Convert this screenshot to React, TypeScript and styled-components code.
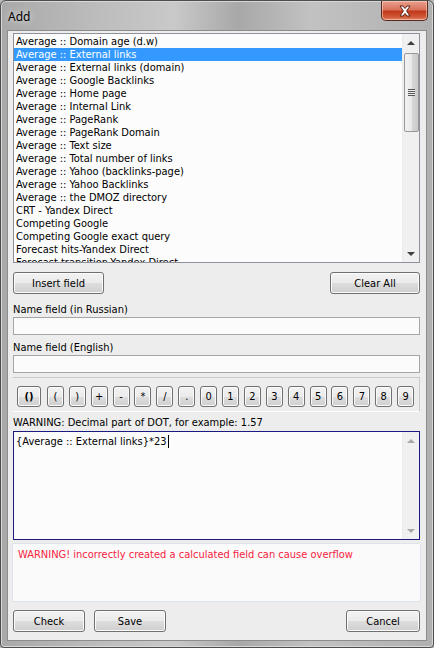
import React from 'react';
import styled, { createGlobalStyle } from 'styled-components';

const GlobalStyle = createGlobalStyle`
    html, body {
        margin: 0;
        padding: 0;
        background: #b8b8b8;
    }
    * {
        box-sizing: border-box;
    }
`;

const Window = styled.div`
    width: 434px;
    height: 648px;
    border: 1px solid #4d4d4d;
    border-radius: 6px 6px 4px 4px;
    padding: 0 6px 6px 6px;
    display: flex;
    flex-direction: column;
    background: linear-gradient(90deg, #a9a9a9 0%, #bcbcbc 22%, #c9c9c9 40%, #a8a8a8 55%, #c2c2c2 72%, #b0b0b0 100%);
    box-shadow: inset 0 0 0 1px #d8d8d8;
    font-family: 'DejaVu Sans Condensed', 'DejaVu Sans', sans-serif;
    font-size: 11px;
    color: #000;
    overflow: hidden;
`;

const TitleBar = styled.div`
    height: 29px;
    display: flex;
    align-items: flex-start;
    justify-content: space-between;
`;

const Title = styled.div`
    margin-top: 7px;
    margin-left: 1px;
    font-family: 'Noto Sans', 'DejaVu Sans', sans-serif;
    font-size: 12px;
    color: #000;
    text-shadow: 0 0 6px rgba(255, 255, 255, 0.9);
`;

const CloseButton = styled.div`
    width: 47px;
    height: 20px;
    margin-right: -1px;
    border: 1px solid #5a2a22;
    border-top: none;
    border-radius: 0 0 5px 5px;
    background: linear-gradient(#e8a08e 0%, #d8735c 45%, #c2391c 55%, #d15a3a 85%, #e08a6a 100%);
    box-shadow: inset 0 0 0 1px rgba(255, 220, 200, 0.55);
    display: flex;
    align-items: center;
    justify-content: center;
`;

const Client = styled.div`
    flex: 1;
    border: 1px solid #8c8c8c;
    background: #ededed;
    padding: 2px 6px 8px 5px;
    display: flex;
    flex-direction: column;
`;

const ListBox = styled.div`
    height: 230px;
    border: 1px solid #8e9199;
    background: #fcfcfc;
    display: flex;
    overflow: hidden;
`;

const ListItems = styled.div`
    flex: 1;
    padding-top: 1px;
    overflow: hidden;
`;

const ListItem = styled.div<{ $selected?: boolean }>`
    height: 13px;
    line-height: 13px;
    padding-left: 2px;
    white-space: nowrap;
    background: ${(p) => (p.$selected ? '#3399ff' : 'transparent')};
    color: ${(p) => (p.$selected ? '#fff' : '#000')};
`;

const VScroll = styled.div<{ $disabled?: boolean }>`
    width: 17px;
    background: #f0f0f0;
    border-left: 1px solid #ececec;
    display: flex;
    flex-direction: column;
    align-items: center;
    justify-content: space-between;
    padding: 7px 0 6px 0;
    position: relative;
`;

const Arrow = styled.div<{ $down?: boolean; $disabled?: boolean }>`
    width: 0;
    height: 0;
    border-left: 4px solid transparent;
    border-right: 4px solid transparent;
    ${(p) =>
        p.$down
            ? `border-top: 4px solid ${p.$disabled ? '#a8a8a8' : '#404040'};`
            : `border-bottom: 4px solid ${p.$disabled ? '#a8a8a8' : '#404040'};`}
`;

const Thumb = styled.div`
    position: absolute;
    left: 1px;
    top: 19px;
    width: 15px;
    height: 79px;
    border: 1px solid #979797;
    border-radius: 2px;
    background: linear-gradient(90deg, #f3f3f3, #e8e8e8 50%, #d8d8d8 51%, #cacaca);
    display: flex;
    align-items: center;
    justify-content: center;
`;

const Grip = styled.div`
    width: 7px;
    height: 7px;
    background: repeating-linear-gradient(#555 0 1px, #eee 1px 2px);
`;

const ButtonRow = styled.div<{ $top: number }>`
    margin-top: ${(p) => p.$top}px;
    display: flex;
    gap: 9px;
`;

const Spacer = styled.div`
    flex: 1;
`;

const Button = styled.button<{ $width: number }>`
    width: ${(p) => p.$width}px;
    height: 22px;
    padding: 0;
    border: 1px solid #707070;
    border-radius: 3px;
    background: linear-gradient(#f2f2f2 0%, #ebebeb 50%, #dddddd 51%, #cfcfcf 100%);
    box-shadow: inset 0 0 0 1px #fbfbfb;
    font-family: inherit;
    font-size: 11px;
    color: #000;
`;

const Label = styled.div<{ $top: number }>`
    margin-top: ${(p) => p.$top}px;
    height: 14px;
    line-height: 14px;
    padding-left: 0;
`;

const TextInput = styled.div`
    height: 18px;
    border: 1px solid #a5a5a5;
    background: #fbfbfb;
`;

const KeyPanel = styled.div`
    margin-top: 4px;
    height: 35px;
    border-top: 1px solid #c9c9c9;
    border-right: 1px solid #c9c9c9;
    border-bottom: 1px solid #ffffff;
    padding: 8px 0 0 4px;
    display: flex;
    gap: 4.9px;
`;

const KeyButton = styled.button<{ $wide?: boolean }>`
    width: ${(p) => (p.$wide ? 24 : 17)}px;
    margin-right: ${(p) => (p.$wide ? 1 : 0)}px;
    height: 21px;
    padding: 0;
    border: 1px solid #707070;
    border-radius: 3px;
    background: linear-gradient(#f2f2f2 0%, #ebebeb 50%, #dddddd 51%, #cfcfcf 100%);
    box-shadow: inset 0 0 0 1px #fbfbfb;
    font-family: inherit;
    font-size: 11px;
    font-weight: ${(p) => (p.$wide ? 'bold' : 'normal')};
    color: #000;
`;

const Hint = styled.div`
    margin-top: 3px;
    height: 16px;
    line-height: 16px;
`;

const Editor = styled.div`
    height: 109px;
    border: 1px solid #1a1a80;
    background: #fcfcfc;
    display: flex;
`;

const EditorText = styled.div`
    flex: 1;
    padding: 3px 0 0 2px;
    line-height: 13px;
    white-space: nowrap;
`;

const Caret = styled.span`
    display: inline-block;
    width: 1px;
    height: 13px;
    background: #000;
    vertical-align: top;
    margin-left: 1px;
`;

const WarningPanel = styled.div`
    margin-top: 3px;
    margin-left: -1px;
    margin-right: -1px;
    height: 59px;
    border: 1px solid #dde3ea;
    border-radius: 2px;
    background: #fafafa;
    padding: 4px 0 0 5px;
    color: #f5233f;
    line-height: 13px;
`;

const items = [
    'Average :: Domain age (d.w)',
    'Average :: External links',
    'Average :: External links (domain)',
    'Average :: Google Backlinks',
    'Average :: Home page',
    'Average :: Internal Link',
    'Average :: PageRank',
    'Average :: PageRank Domain',
    'Average :: Text size',
    'Average :: Total number of links',
    'Average :: Yahoo (backlinks-page)',
    'Average :: Yahoo Backlinks',
    'Average :: the DMOZ directory',
    'CRT - Yandex Direct',
    'Competing Google',
    'Competing Google exact query',
    'Forecast hits-Yandex Direct',
    'Forecast transition-Yandex Direct',
];

const keys = ['(', ')', '+', '-', '*', '/', '.', '0', '1', '2', '3', '4', '5', '6', '7', '8', '9'];

const CloseIcon = () => (
    <svg width="14" height="12" viewBox="0 0 14 12">
        <path
            d="M2 1 L5 1 L7 3.5 L9 1 L12 1 L8.6 6 L12 11 L9 11 L7 8.5 L5 11 L2 11 L5.4 6 Z"
            fill="#ffffff"
            stroke="#5b2318"
            strokeWidth="1"
            strokeLinejoin="round"
        />
    </svg>
);

export default function App() {
    return (
        <>
            <GlobalStyle />
            <Window>
                <TitleBar>
                    <Title>Add</Title>
                    <CloseButton>
                        <CloseIcon />
                    </CloseButton>
                </TitleBar>
                <Client>
                    <ListBox>
                        <ListItems>
                            {items.map((item, i) => (
                                <ListItem key={item} $selected={i === 1}>
                                    {item}
                                </ListItem>
                            ))}
                        </ListItems>
                        <VScroll>
                            <Arrow />
                            <Thumb>
                                <Grip />
                            </Thumb>
                            <Arrow $down />
                        </VScroll>
                    </ListBox>

                    <ButtonRow $top={9}>
                        <Button $width={91}>Insert field</Button>
                        <Spacer />
                        <Button $width={90}>Clear All</Button>
                    </ButtonRow>

                    <Label $top={9}>Name field (in Russian)</Label>
                    <TextInput />
                    <Label $top={6}>Name field (English)</Label>
                    <TextInput />

                    <KeyPanel>
                        <KeyButton $wide>()</KeyButton>
                        {keys.map((k) => (
                            <KeyButton key={k}>{k}</KeyButton>
                        ))}
                    </KeyPanel>

                    <Hint>WARNING: Decimal part of DOT, for example: 1.57</Hint>

                    <Editor>
                        <EditorText>
                            {'{Average :: External links}*23'}
                            <Caret />
                        </EditorText>
                        <VScroll>
                            <Arrow $disabled />
                            <Arrow $down $disabled />
                        </VScroll>
                    </Editor>

                    <WarningPanel>WARNING! incorrectly created a calculated field can cause overflow</WarningPanel>

                    <ButtonRow $top={8}>
                        <Button $width={72}>Check</Button>
                        <Button $width={72}>Save</Button>
                        <Spacer />
                        <Button $width={74}>Cancel</Button>
                    </ButtonRow>
                </Client>
            </Window>
        </>
    );
}
